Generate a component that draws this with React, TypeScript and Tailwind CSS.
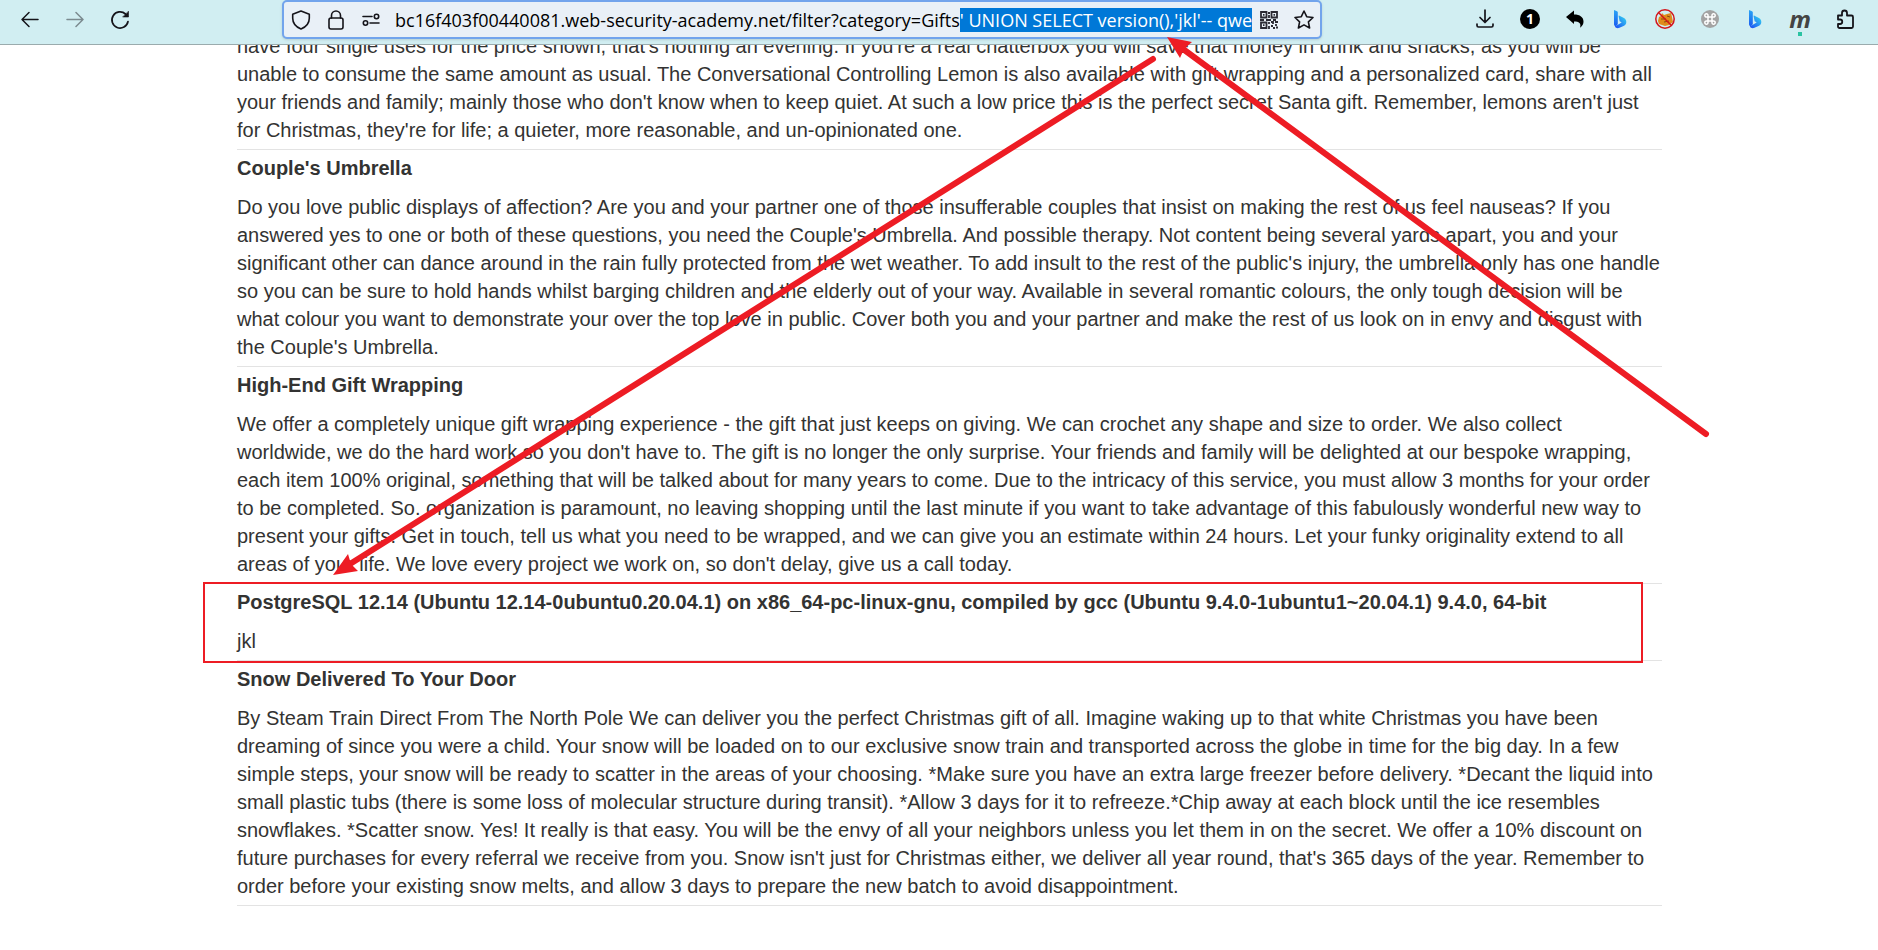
import { useEffect, useRef } from "react";
import type { ReactNode } from "react";

const ADDRESS = "bc16f403f00440081.web-security-academy.net/filter?category=Gifts";
const PAYLOAD = "' UNION SELECT version(),'jkl'-- qwe";

type Product = { name: string; description: string };

const products: Product[] = [
  {
    name: "Couple's Umbrella",
    description:
      "Do you love public displays of affection? Are you and your partner one of those insufferable couples that insist on making the rest of us feel nauseas? If you answered yes to one or both of these questions, you need the Couple's Umbrella. And possible therapy. Not content being several yards apart, you and your significant other can dance around in the rain fully protected from the wet weather. To add insult to the rest of the public's injury, the umbrella only has one handle so you can be sure to hold hands whilst barging children and the elderly out of your way. Available in several romantic colours, the only tough decision will be what colour you want to demonstrate your over the top love in public. Cover both you and your partner and make the rest of us look on in envy and disgust with the Couple's Umbrella.",
  },
  {
    name: "High-End Gift Wrapping",
    description:
      "We offer a completely unique gift wrapping experience - the gift that just keeps on giving. We can crochet any shape and size to order. We also collect worldwide, we do the hard work so you don't have to. The gift is no longer the only surprise. Your friends and family will be delighted at our bespoke wrapping, each item 100% original, something that will be talked about for many years to come. Due to the intricacy of this service, you must allow 3 months for your order to be completed. So. organization is paramount, no leaving shopping until the last minute if you want to take advantage of this fabulously wonderful new way to present your gifts. Get in touch, tell us what you need to be wrapped, and we can give you an estimate within 24 hours. Let your funky originality extend to all areas of your life. We love every project we work on, so don't delay, give us a call today.",
  },
  {
    name: "PostgreSQL 12.14 (Ubuntu 12.14-0ubuntu0.20.04.1) on x86_64-pc-linux-gnu, compiled by gcc (Ubuntu 9.4.0-1ubuntu1~20.04.1) 9.4.0, 64-bit",
    description: "jkl",
  },
  {
    name: "Snow Delivered To Your Door",
    description:
      "By Steam Train Direct From The North Pole We can deliver you the perfect Christmas gift of all. Imagine waking up to that white Christmas you have been dreaming of since you were a child. Your snow will be loaded on to our exclusive snow train and transported across the globe in time for the big day. In a few simple steps, your snow will be ready to scatter in the areas of your choosing. *Make sure you have an extra large freezer before delivery. *Decant the liquid into small plastic tubs (there is some loss of molecular structure during transit). *Allow 3 days for it to refreeze.*Chip away at each block until the ice resembles snowflakes. *Scatter snow. Yes! It really is that easy. You will be the envy of all your neighbors unless you let them in on the secret. We offer a 10% discount on future purchases for every referral we receive from you. Snow isn't just for Christmas either, we deliver all year round, that's 365 days of the year. Remember to order before your existing snow melts, and allow 3 days to prepare the new batch to avoid disappointment.",
  },
];

function IconButton({ label, children, className = "" }: { label: string; children: ReactNode; className?: string }) {
  return (
    <button type="button" aria-label={label} className={`flex size-5 shrink-0 items-center justify-center ${className}`}>
      {children}
    </button>
  );
}

function Stroke({ children, width = "1.6" }: { children: ReactNode; width?: string }) {
  return (
    <svg viewBox="0 0 20 20" className="size-5" fill="none" stroke="currentColor" strokeWidth={width} strokeLinecap="round" strokeLinejoin="round">
      {children}
    </svg>
  );
}

function BingIcon({ id }: { id: string }) {
  return (
    <svg viewBox="0 0 20 20" className="size-5">
      <defs>
        <linearGradient id={`${id}-stem`} x1="0" y1="0" x2="0" y2="1">
          <stop offset="0" stopColor="#2aa5f5" />
          <stop offset="1" stopColor="#1a5cf0" />
        </linearGradient>
        <linearGradient id={`${id}-bowl`} x1="1" y1="0" x2="0" y2="1">
          <stop offset="0" stopColor="#35dcf0" />
          <stop offset="1" stopColor="#1b48f4" />
        </linearGradient>
      </defs>
      <path d="M4 1l3 1.200c.5.2.8.6.8 1.100v12L5.600 17.500C4.600 17 4 16 4 15z" fill={`url(#${id}-stem)`} />
      <path d="M9 6.500l5 2.600c1.500.8 2.300 2.300 2.300 3.900 0 1.600-.8 3-2.200 3.800L9.500 18.700c-1.700.9-3.700.4-4.700-1.200l6.900-4.100-1.500-.8c-.3-.2-.5-.4-.6-.7L8.600 7.200c-.1-.5.1-.8.4-.7z" fill={`url(#${id}-bowl)`} />
    </svg>
  );
}

function Toolbar() {
  const address = useRef<HTMLInputElement>(null);

  useEffect(() => {
    const field = address.current;
    if (!field) return;
    field.focus({ preventScroll: true });
    field.setSelectionRange(ADDRESS.length, field.value.length);
  }, []);

  return (
    <header className="relative z-10 flex h-[45px] items-start border-b border-[#9aabad] bg-[#d1eef2] text-[#15141a]">
      <nav className="flex w-[282px] shrink-0 gap-[25px] pt-[10px] pl-5">
        <IconButton label="Back">
          <Stroke width="1.5"><path d="M18 9.500H2M9 2.500l-7 7 7 7" /></Stroke>
        </IconButton>
        <IconButton label="Forward" className="opacity-45">
          <Stroke width="1.5"><path d="M2 9.500h16M11 2.500l7 7-7 7" /></Stroke>
        </IconButton>
        <IconButton label="Reload">
          <Stroke width="1.7">
            <path d="M18 11.500A8.100 8.100 0 1 1 15.500 4" />
            <path d="M18.500 1.500v5.500H13z" fill="currentColor" strokeWidth="0.6" />
          </Stroke>
        </IconButton>
      </nav>

      <div className="flex h-[39px] min-w-0 flex-1 items-center rounded-[5px] border-2 border-[#72a4ec] bg-[#e9f0f7] pr-[6px] pl-[7px] shadow-sm">
        <IconButton label="Tracking protection">
          <Stroke><path d="M10 1l8.300 3.200v4c0 5-3.300 8.700-8.300 10.800C5 16.900 1.700 13.200 1.700 8.200v-4z" /></Stroke>
        </IconButton>
        <IconButton label="Connection secure" className="ml-[15px]">
          <Stroke><rect x="3" y="8" width="14" height="11" rx="2" /><path d="M5.500 8V5.500a4.500 4.500 0 0 1 9 0V8" /></Stroke>
        </IconButton>
        <IconButton label="Permissions" className="mr-[14px] ml-[15px]">
          <Stroke><path d="M2 6.500h9M9 13h9" /><circle cx="15.500" cy="6.500" r="2.200" /><circle cx="4.500" cy="13" r="2.200" /></Stroke>
        </IconButton>
        <input
          ref={address}
          aria-label="Address"
          defaultValue={ADDRESS + PAYLOAD}
          spellCheck={false}
          className="h-8 min-w-0 flex-1 bg-transparent font-['Open_Sans',sans-serif] text-lg text-black outline-none selection:bg-[#0078d7] selection:text-white"
        />
        <IconButton label="QR code">
          <svg viewBox="0 0 18 18" className="size-[18px]" fill="none" stroke="#2b2a33" strokeWidth="1.8">
            <path d="M1 1h5.500v5.500H1zM11.500 1H17v5.500h-5.500zM1 11.500h5.500V17H1z" />
            <path d="M3 3.800h1.500M13.500 3.800H15M3 14.200h1.500M8 2h2M9 4v3M0 9h4M6 9h5M13 9h3M9 11v2M11 11h2v2M15 11h3M9 15v3M11 15h2M13 17h2M16 13v2M16 16.500h2" />
          </svg>
        </IconButton>
        <IconButton label="Bookmark this page" className="ml-[15px]">
          <Stroke><path d="M10 1l2.700 5.700 6.300.8-4.600 4.300 1.200 6.200-5.600-3.100L4.400 18l1.200-6.200L1 7.500l6.300-.8z" /></Stroke>
        </IconButton>
      </div>

      <div className="flex w-[556px] shrink-0 justify-end gap-[25px] pt-[9px] pr-[23px]">
        <IconButton label="Downloads">
          <Stroke width="1.7"><path d="M10 1v12M5 8.500l5 5 5-5M2 15v1.500A1.500 1.500 0 0 0 3.500 18h13a1.500 1.500 0 0 0 1.500-1.500V15" /></Stroke>
        </IconButton>
        <IconButton label="Account 1">
          <span className="flex size-5 items-center justify-center rounded-full bg-black font-['Open_Sans',sans-serif] text-sm leading-5 font-bold text-white">1</span>
        </IconButton>
        <IconButton label="Undo">
          <svg viewBox="0 0 20 20" className="size-5" fill="black">
            <path d="M1 8L9 1.500v4c6 0 9.500 2.700 9.500 7 0 2.300-.8 4.300-3.500 6.200 1.500-4.600-1-6.300-6-6.300V15z" />
          </svg>
        </IconButton>
        <IconButton label="Bing"><BingIcon id="bing-a" /></IconButton>
        <IconButton label="Cookie blocker">
          <svg viewBox="0 0 20 20" className="size-5">
            <path d="M4 8l2-1 1-3 2 2 3-1 4-1 1 4 1 5-4 3-4 1-6-2-1-3z" fill="#e08a1c" />
            <path d="M6 10h5M9 13l5-1M12 7l3 1" stroke="#8a4b10" />
            <circle cx="10" cy="10" r="9.200" fill="none" stroke="#d3141b" strokeWidth="1.5" />
            <path d="M3.500 3.500l13 13" stroke="#d3141b" strokeWidth="1.5" />
          </svg>
        </IconButton>
        <IconButton label="Shortcuts">
          <svg viewBox="0 0 20 20" className="size-5">
            <circle cx="10" cy="10" r="9" fill="#a3a3a3" />
            <path d="M8 8h4v4H8zM8 8H6.500A1.600 1.600 0 1 1 8 6.500zM12 8V6.500A1.600 1.600 0 1 1 13.500 8zM12 12h1.500a1.600 1.600 0 1 1-1.500 1.500zM8 12v1.500A1.600 1.600 0 1 1 6.500 12z" fill="none" stroke="white" strokeWidth="1.5" />
          </svg>
        </IconButton>
        <IconButton label="Bing chat"><BingIcon id="bing-b" /></IconButton>
        <IconButton label="Monkey" className="relative">
          <span className="font-['Open_Sans',sans-serif] text-2xl leading-5 font-bold text-[#444] italic">m</span>
          <span className="absolute top-[23px] left-2 size-1 bg-[#2ac3a2]" />
        </IconButton>
        <IconButton label="Extensions">
          <Stroke width="1.8"><path d="M3 6.500h4V4a2.500 2.500 0 0 1 5 0v2.500h4.500A1.500 1.500 0 0 1 18 8v9.500a1.500 1.500 0 0 1-1.500 1.500h-12A1.500 1.500 0 0 1 3 17.500V15h2a2.200 2.200 0 0 0 0-4.500H3z" /></Stroke>
        </IconButton>
      </div>
    </header>
  );
}

function Annotations() {
  return (
    <svg aria-hidden="true" width="1878" height="950" className="pointer-events-none absolute top-0 left-0 z-20" fill="#ed1c24" stroke="#ed1c24">
      <rect x="204" y="583" width="1438" height="79" fill="none" strokeWidth="2" />
      <path d="M1153 59L350 564" strokeWidth="6" strokeLinecap="round" />
      <path d="M333 575L348 554L351 564L358 571Z" stroke="none" />
      <path d="M1706 434L1183 49" strokeWidth="6" strokeLinecap="round" />
      <path d="M1167 37L1192 42L1184 49L1180 58Z" stroke="none" />
    </svg>
  );
}

export default function App() {
  return (
    <div className="relative min-h-screen overflow-hidden bg-white font-['Liberation_Sans',Arial,sans-serif] text-[#333332]">
      <Toolbar />
      <main className="-mt-[18px] pr-[216px] pl-[237px]">
        <table className="w-full border-collapse text-left text-xl leading-7">
          <tbody>
            <tr>
              <td className="py-[5px] pr-px">
                have four single uses for the price shown, that's nothing an evening. If you're a real chatterbox you will save that money in drink and snacks, as you will be unable to consume the same amount as usual. The Conversational Controlling Lemon is also available with gift wrapping and a personalized card, share with all your friends and family; mainly those who don't know when to keep quiet. At such a low price this is the perfect secret Santa gift. Remember, lemons aren't just for Christmas, they're for life; a quieter, more reasonable, and un-opinionated one.
              </td>
            </tr>
          </tbody>
          {products.map((product) => (
            <tbody key={product.name} className="border-y border-[#e3e3e3]">
              <tr>
                <th scope="row" className="pt-1 pb-[6px] font-bold">{product.name}</th>
              </tr>
              <tr>
                <td className="py-[5px] pr-px">{product.description}</td>
              </tr>
            </tbody>
          ))}
        </table>
      </main>
      <Annotations />
    </div>
  );
}
